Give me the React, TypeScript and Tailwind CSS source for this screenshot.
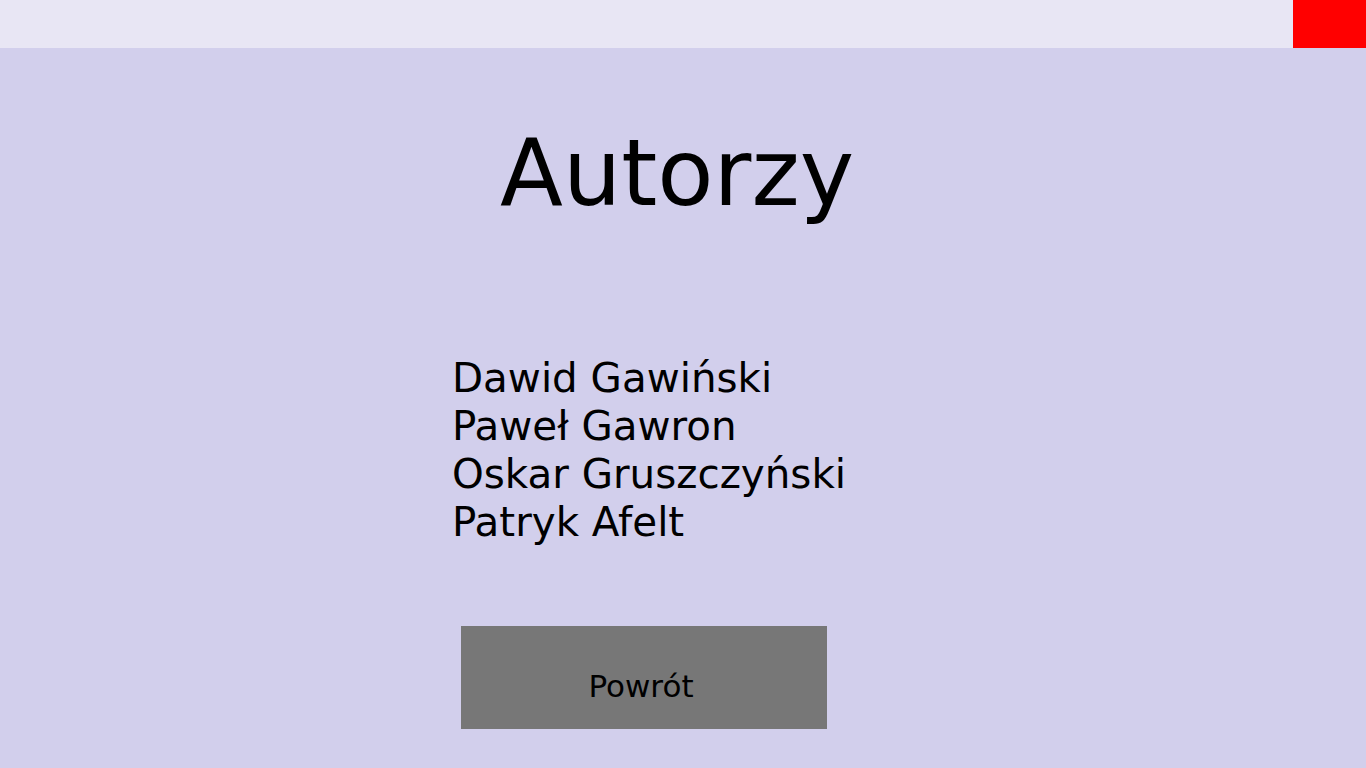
export default function App() {
  return (
    <div className="w-[1366px] h-[768px] bg-[#d2cfec] flex flex-col overflow-hidden" style={{ fontFamily: '"DejaVu Sans", sans-serif' }}>
      <div className="h-12 bg-[#e8e6f4] flex justify-end">
        <div className="w-[73px] h-12 bg-[#ff0000]" />
      </div>
      <div className="flex flex-col">
        <h1 className="text-[92px] leading-[110px] text-black mt-[71px] pl-[500px]">Autorzy</h1>
        <div className="mt-[125px] pl-[452px] text-[40.4px] leading-[48px] text-black">
          <div>Dawid Gawiński</div>
          <div>Paweł Gawron</div>
          <div>Oskar Gruszczyński</div>
          <div>Patryk Afelt</div>
        </div>
        <div className="mt-[80px] ml-[461px] w-[366px] h-[103px] bg-[#777777] flex justify-center pt-[41px] pr-[6px] text-[31px] leading-[38px] text-black">
          Powrót
        </div>
      </div>
    </div>
  );
}
